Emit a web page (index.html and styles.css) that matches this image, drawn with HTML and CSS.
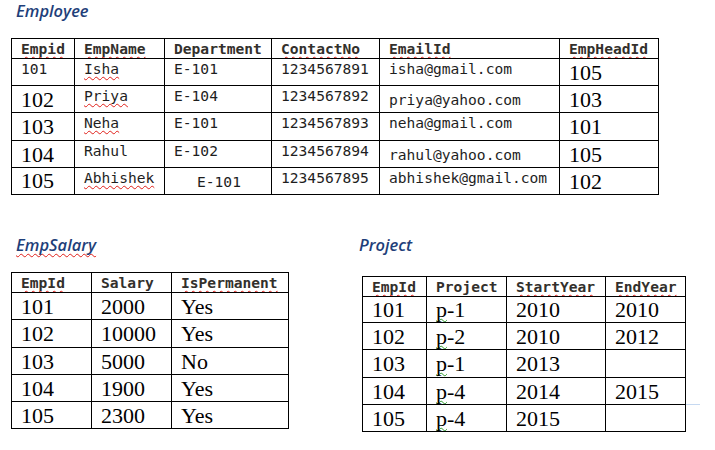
FILE: index.html
```html
<!DOCTYPE html>
<html lang="en">
<head>
<meta charset="utf-8">
<title>Employee tables</title>
<link rel="stylesheet" href="styles.css">
</head>
<body>
<div class="page">
  <h2 class="title">Employee</h2>
  <table class="tbl emp">
    <tr class="hd">
      <th class="w63"><span class="sq">Empid</span></th>
      <th class="w90"><span class="sq">EmpName</span></th>
      <th class="w107">Department</th>
      <th class="w108"><span class="sq">ContactNo</span></th>
      <th class="w180"><span class="sq">EmailId</span></th>
      <th class="w99"><span class="sq">EmpHeadId</span></th>
    </tr>
    <tr class="h27">
      <td class="m">101</td>
      <td class="m"><span class="sq">Isha</span></td>
      <td class="m">E-101</td>
      <td class="m">1234567891</td>
      <td class="m">isha@gmail.com</td>
      <td class="s">105</td>
    </tr>
    <tr class="h27">
      <td class="s">102</td>
      <td class="m"><span class="sq">Priya</span></td>
      <td class="m">E-104</td>
      <td class="m">1234567892</td>
      <td class="m low">priya@yahoo.com</td>
      <td class="s">103</td>
    </tr>
    <tr class="h28">
      <td class="s">103</td>
      <td class="m"><span class="sq">Neha</span></td>
      <td class="m">E-101</td>
      <td class="m">1234567893</td>
      <td class="m">neha@gmail.com</td>
      <td class="s">101</td>
    </tr>
    <tr class="h27">
      <td class="s">104</td>
      <td class="m">Rahul</td>
      <td class="m">E-102</td>
      <td class="m">1234567894</td>
      <td class="m low">rahul@yahoo.com</td>
      <td class="s">105</td>
    </tr>
    <tr class="h27">
      <td class="s s0">105</td>
      <td class="m"><span class="sq">Abhishek</span></td>
      <td class="m low shift">E-101</td>
      <td class="m">1234567895</td>
      <td class="m">abhishek@gmail.com</td>
      <td class="s">102</td>
    </tr>
  </table>

  <div class="lower">
    <section class="sal-sec">
      <h2 class="title"><span class="sq">EmpSalary</span></h2>
      <table class="tbl sal">
        <tr class="hd">
          <th class="w80"><span class="sq">EmpId</span></th>
          <th class="w80">Salary</th>
          <th class="w117"><span class="sq">IsPermanent</span></th>
        </tr>
        <tr class="h27"><td class="s">101</td><td class="s">2000</td><td class="s">Yes</td></tr>
        <tr class="h28"><td class="s">102</td><td class="s">10000</td><td class="s">Yes</td></tr>
        <tr class="h27"><td class="s">103</td><td class="s">5000</td><td class="s">No</td></tr>
        <tr class="h27"><td class="s">104</td><td class="s">1900</td><td class="s">Yes</td></tr>
        <tr class="h27"><td class="s">105</td><td class="s">2300</td><td class="s">Yes</td></tr>
      </table>
    </section>

    <section class="proj-sec">
      <h2 class="title proj-title">Project</h2>
      <div class="proj-wrap">
        <table class="tbl proj">
          <tr class="hd">
            <th class="w64"><span class="sq">EmpId</span></th>
            <th class="w80">Project</th>
            <th class="w99"><span class="sq">StartYear</span></th>
            <th class="w80"><span class="sq">EndYear</span></th>
          </tr>
          <tr class="h26"><td class="s s0">101</td><td class="s s0"><span class="gq">p</span>-1</td><td class="s s0">2010</td><td class="s s0">2010</td></tr>
          <tr class="h27"><td class="s">102</td><td class="s"><span class="gq">p</span>-2</td><td class="s">2010</td><td class="s">2012</td></tr>
          <tr class="h28"><td class="s">103</td><td class="s"><span class="gq">p</span>-1</td><td class="s">2013</td><td class="s"></td></tr>
          <tr class="h27"><td class="s">104</td><td class="s"><span class="gq">p</span>-4</td><td class="s">2014</td><td class="s">2015</td></tr>
          <tr class="h27"><td class="s">105</td><td class="s"><span class="gq">p</span>-4</td><td class="s">2015</td><td class="s"></td></tr>
        </table>
      </div>
    </section>
  </div>
</div>
</body>
</html>
```
FILE: styles.css
```css
html, body {
  margin: 0;
  padding: 0;
  background: #fff;
}

.page {
  padding-left: 11px;
  width: 704px;
}

.title {
  margin: 0 0 0 5px;
  font-family: "Open Sans", "DejaVu Sans", sans-serif;
  font-style: italic;
  font-weight: 600;
  font-size: 16.5px;
  line-height: 22px;
  color: #1f3f7a;
}

.tbl {
  border-collapse: separate;
  border-spacing: 0;
  table-layout: fixed;
  border-top: 1px solid #000;
  border-left: 1px solid #000;
}

.tbl th,
.tbl td {
  box-sizing: border-box;
  border-right: 1px solid #000;
  border-bottom: 1px solid #000;
  padding: 1px 0 0 9px;
  vertical-align: top;
  text-align: left;
  white-space: nowrap;
  overflow: hidden;
}

.tbl th {
  font-family: "DejaVu Sans Mono", monospace;
  font-weight: bold;
  font-size: 14.6px;
  line-height: 17px;
  color: #33302c;
}

.hd { height: 20px; }
.h26 { height: 26px; }
.h27 { height: 27px; }
.h28 { height: 28px; }

.m {
  font-family: "DejaVu Sans Mono", monospace;
  font-size: 14.6px;
  line-height: 17px;
  color: #1e1e1e;
}

.s {
  font-family: "Liberation Serif", "Times New Roman", serif;
  font-size: 22px;
  line-height: 25px;
  color: #000;
}

.tbl td.s0 { padding-top: 0; }
.tbl td.low { padding-top: 5px; }
.tbl td.shift { padding-left: 32px; }

.sq {
  text-decoration: underline wavy #e0201a;
  text-decoration-thickness: 1px;
  text-underline-offset: 2px;
  text-decoration-skip-ink: none;
}

.gq {
  text-decoration: underline wavy #2e9a2e;
  text-decoration-thickness: 1px;
  text-underline-offset: 1px;
  text-decoration-skip-ink: none;
}

.emp {
  width: 648px;
  margin-top: 16px;
}

.w63 { width: 63px; }
.w90 { width: 90px; }
.w107 { width: 107px; }
.w108 { width: 108px; }
.w180 { width: 180px; }
.w99 { width: 99px; }
.w80 { width: 80px; }
.w117 { width: 117px; }
.w64 { width: 64px; }

.lower {
  display: flex;
  margin-top: 39px;
}

.sal-sec {
  width: 351px;
}

.sal {
  width: 278px;
  margin-top: 16px;
}

.proj-title {
  margin-left: -3px;
}

.proj-wrap {
  position: relative;
  margin-top: 20px;
  width: 324px;
}

.proj-wrap::after {
  content: "";
  position: absolute;
  left: 324px;
  top: 128px;
  width: 14px;
  height: 1px;
  background: #c6d9f1;
}

.proj {
  width: 324px;
}
```
